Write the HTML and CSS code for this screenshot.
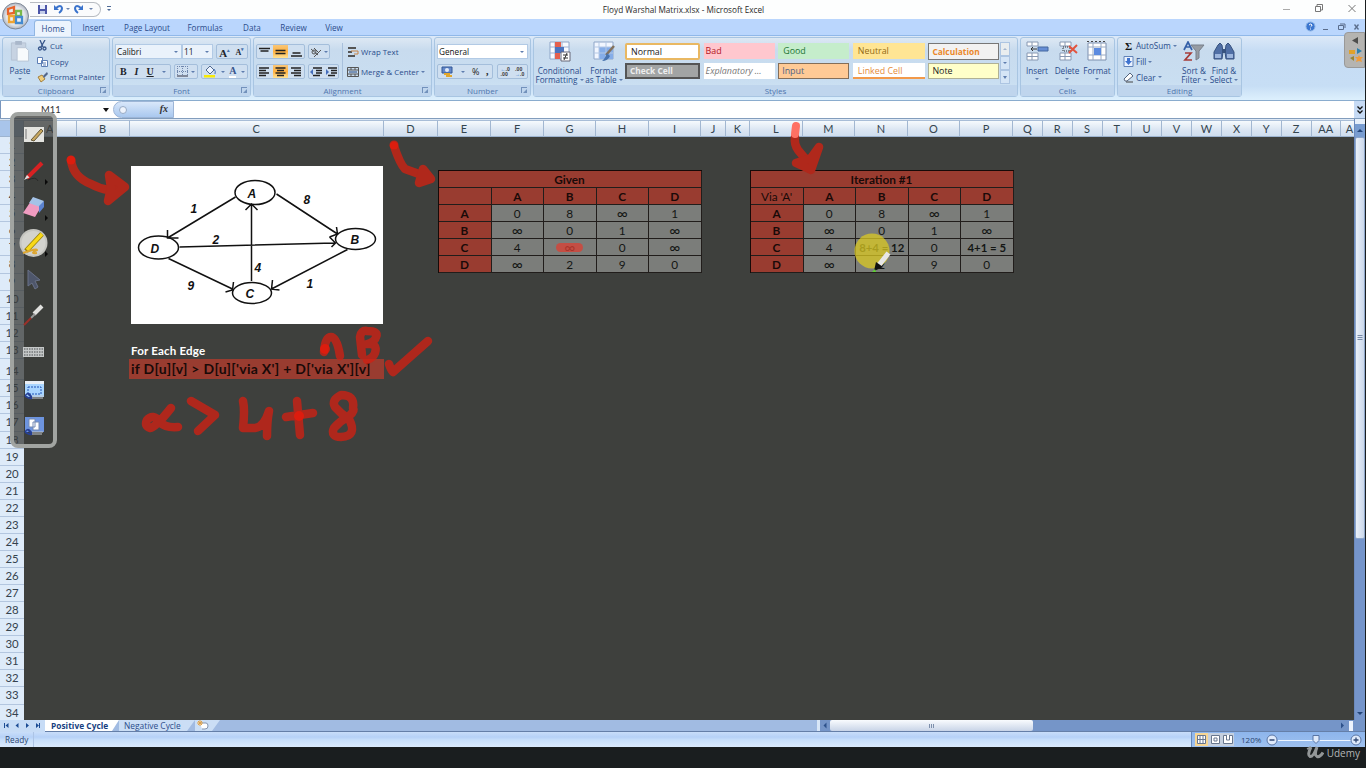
FILE: index.html
```html
<!DOCTYPE html>
<html lang="en"><head><meta charset="utf-8"><title>Floyd Warshal Matrix.xlsx - Microsoft Excel</title>
<link rel="stylesheet" href="styles.css"></head>
<body>
<div class="app">
<header class="titlebar">
  <svg class="orb" width="32" height="32" viewBox="0 0 32 32"><defs><radialGradient id="og"><stop offset="0" stop-color="#fff"/><stop offset=".7" stop-color="#e2e5ea"/><stop offset="1" stop-color="#aeb5c0"/></radialGradient></defs><circle cx="15.5" cy="16" r="13" fill="url(#og)" stroke="#7d8796"/><g fill="none" stroke-width="2.3"><path d="M8 9l6-2v6l-6 1z" stroke="#e8632b"/><path d="M16 11h5v5h-5z" stroke="#79b84a"/><path d="M9 16h5v6H9z" stroke="#f0a431"/><path d="M16 17h6v6h-6z" stroke="#438ad0"/></g></svg>
  <div class="qat">
    <svg width="66" height="14" viewBox="0 0 66 14"><path d="M3 2h9v9H3z" fill="#4c56a8"/><path d="M5 2h5v4H5z" fill="#e6ecfa"/><path d="M5 8h5v3H5z" fill="#c3cde8"/><path d="M21 5q5-4 6 0 0 3-3 5" fill="none" stroke="#3a73cc" stroke-width="2"/><path d="M19 2v5h5z" fill="#3a73cc"/><path d="M31 5h4l-2 2z" fill="#6c84ad"/><path d="M46 5q-5-4-6 0 0 3 3 5" fill="none" stroke="#3a73cc" stroke-width="2"/><path d="M48 2v5h-5z" fill="#3a73cc"/><path d="M54 5h4l-2 2z" fill="#6c84ad"/></svg>
  </div>
  <svg class="qmore" width="6" height="8" viewBox="0 0 6 8"><path d="M1 1h4v1H1zM1 4h4L3 6z" fill="#4f6b97"/></svg>
  <div class="title">Floyd Warshal Matrix.xlsx - Microsoft Excel</div>
  <svg class="winbtns" width="80" height="16" viewBox="0 0 80 16" fill="none" stroke="#777"><path d="M3 9.500h7" stroke="#aaa"/><path d="M35.500 6.500h5v5h-5zM37 6V4.500h5.500V10H41"/><path d="M68.500 5l7 7M75.500 5l-7 7"/></svg>
</header>
<nav class="tabs"><span class="tab on">Home</span><span class="tab t2">Insert</span><span class="tab t3">Page Layout</span><span class="tab t4">Formulas</span><span class="tab t5">Data</span><span class="tab t6">Review</span><span class="tab t7">View</span>
<svg class="docbtns" width="60" height="16" viewBox="0 0 60 16" fill="none"><circle cx="8.500" cy="7.500" r="4.500" fill="#3b76d0" stroke="#8db4e4"/><path d="M7 6q2-2 3 0 0 1-1.500 2M8.500 9.500v1" stroke="#fff"/><path d="M21 10.500h5M36.500 6.500h5v4h-5zM38 5h5v4" stroke="#5a6d8c"/><path d="M52.500 5.500l4 5M56.500 5.500l-4 5" stroke="#5a6d8c" stroke-width="1.300"/></svg></nav>

<section class="ribbon">
 <div class="group clip"><div class="body">
   <div class="big paste"><svg width="22" height="23" viewBox="0 0 22 23"><path d="M2 2h15v18H2z" fill="#c7d3e2" stroke="#b5c2d3"/><path d="M6 0h7v4H6z" fill="#a9b7ca"/><path d="M8 7h9l3 3v11H8z" fill="#f7fafc" stroke="#b9c5d5"/></svg><span>Paste</span><i class="dn"></i></div>
   <div class="list"><div><svg width="11" height="11" viewBox="0 0 11 11" fill="none" stroke="#36558a" stroke-width="1.300"><path d="M3 0l3 7M8 0L4 7"/><circle cx="3" cy="8.500" r="1.500"/><circle cx="7.500" cy="8.500" r="1.500"/></svg>Cut</div><div><svg width="11" height="11" viewBox="0 0 11 11" fill="#fff" stroke="#5d7eb5"><path d="M.5 1.500h5v6h-5zM4.500 4.500h6v6h-6z"/><path d="M6 7h3M6 9h3"/></svg>Copy</div><div><svg width="11" height="11" viewBox="0 0 11 11"><path d="M1 5l4-2 3 4-4 3z" fill="#f0ce7b" stroke="#a4803f"/><path d="M6 4l4-4 1 2-4 4z" fill="#52668b"/></svg>Format Painter</div></div>
 </div><div class="cap">Clipboard<b></b></div></div>

 <div class="group font"><div class="body rows">
   <div class="row"><div class="combo w68">Calibri<i class="dn"></i></div><div class="combo w30">11<i class="dn"></i></div><div class="set w33 ml3"><span class="serif big-a">A<sup>▴</sup></span><span class="serif small">A<sup>▾</sup></span></div></div>
   <div class="row"><div class="set w57"><span class="serif">B</span><span class="serif it">I</span><span class="serif ul">U</span><i class="dn"></i></div><div class="set w25 ml3"><svg width="11" height="11" viewBox="0 0 11 11" fill="none" stroke="#6f86ac" stroke-dasharray="1 1"><path d="M.5 0v10M5.500 0v10M10.500 0v10M0 .5h11M0 5.500h11"/><path d="M0 10h11" stroke="#334" stroke-dasharray="none"/></svg><i class="dn"></i></div><div class="set w48 ml3"><svg width="12" height="13" viewBox="0 0 12 13"><path d="M2 5l4-4 4 4-4 4z" fill="#edf4ff" stroke="#50698f"/><path d="M10 4q2 2 1 5" stroke="#4773b7" fill="none"/><path d="M0 10h11v2.500H0z" fill="#f7ea08"/></svg><i class="dn"></i><span class="serif fontc">A</span><i class="dn"></i></div></div>
 </div><div class="cap">Font<b></b></div></div>

 <div class="group align"><div class="body"><div class="rows inner">
   <div class="row"><div class="set w49 tri"><span><svg width="11" height="12" viewBox="0 0 11 12"><path d="M0 2.500h11M1.500 5h8" stroke="#222" stroke-width="1.400"/></svg></span><span class="hot"><svg width="11" height="12" viewBox="0 0 11 12"><path d="M.5 4.500h10M.5 7.500h10" stroke="#222" stroke-width="1.400"/></svg></span><span><svg width="11" height="12" viewBox="0 0 11 12"><path d="M1.500 7h8M0 10h11" stroke="#222" stroke-width="1.400"/></svg></span></div><div class="set w22 ml3"><svg width="13" height="12" viewBox="0 0 13 12" fill="none" stroke="#555"><circle cx="4" cy="6" r="2"/><path d="M1 3l7 6M4 2l4 4M4 11l7-7"/></svg><i class="dn"></i></div></div>
   <div class="row"><div class="set w49 tri"><span><svg width="11" height="12" viewBox="0 0 11 12"><path d="M0 2h10M0 4.500h7M0 7h10M0 9.500h7" stroke="#222" stroke-width="1.400"/></svg></span><span class="hot"><svg width="11" height="12" viewBox="0 0 11 12"><path d="M.5 2h10M2 4.500h7M.5 7h10M2 9.500h7" stroke="#222" stroke-width="1.400"/></svg></span><span><svg width="11" height="12" viewBox="0 0 11 12"><path d="M0 2h10M3 4.500h7M0 7h10M3 9.500h7" stroke="#222" stroke-width="1.400"/></svg></span></div><div class="set w31 ml3"><svg width="12" height="12" viewBox="0 0 12 12"><path d="M3 2h9M6 4.500h6M6 7h6M3 9.500h7" stroke="#222" stroke-width="1.400"/><path d="M0 6l3-3v6z" fill="#466ebc"/></svg><svg width="12" height="12" viewBox="0 0 12 12"><path d="M3 2h9M6 4.500h6M6 7h6M3 9.500h7" stroke="#222" stroke-width="1.400"/><path d="M4 6L1 3v6z" fill="#466ebc"/></svg></div></div>
 </div><div class="wrapcol"><div><svg width="12" height="12" viewBox="0 0 12 12"><path d="M1 2h8M1 6h4M1 10h7" stroke="#555" stroke-width="2"/><path d="M4 5h7v3H7" fill="none" stroke="#c88345"/></svg><span>Wrap Text</span></div><div><svg width="12" height="12" viewBox="0 0 12 12" fill="none" stroke="#555"><path d="M.5 1.500h11v9H.5zM.5 4h11M.5 8h11M4 1v3M8 1v3M4 8v3M8 8v3"/><path d="M2 6h8" stroke="#24477f"/></svg><span>Merge &amp; Center</span><i class="dn"></i></div></div>
 </div><div class="cap">Alignment<b></b></div></div>

 <div class="group number"><div class="body rows">
  <div class="row"><div class="combo w91">General<i class="dn"></i></div></div>
  <div class="row"><div class="set w56"><svg width="13" height="12" viewBox="0 0 13 12"><path d="M1 1h10v6H1z" fill="#6488c9" stroke="#315796"/><circle cx="6" cy="4" r="2" fill="#dfe9f8"/><path d="M3 8h6M5 10h6" stroke="#e2a72d" stroke-width="2"/></svg><i class="dn"></i><span class="pct">%</span><span class="serif">,</span></div><div class="set w31 ml4 dec"><span><em>←</em>.0<br>.00</span><span>.00<br><em>→</em>.0</span></div></div>
 </div><div class="cap">Number<b></b></div></div>

 <div class="group styles"><div class="body">
  <div class="big cf"><svg width="22" height="22" viewBox="0 0 22 22"><path d="M1 1h19v17H1z" fill="#f7faff" stroke="#8fa6c8"/><path d="M6 1v17M13 1v17M1 6h19M1 12h19" stroke="#9fb2d0"/><path d="M6 1h6v5H6zM6 12h5v6H6z" fill="#e4604e"/><path d="M6 6h9v6H6z" fill="#4b74bf"/><path d="M12 11h9v9h-9z" fill="#fff" stroke="#667"/><path d="M14 14h5M14 17h5M18 12l-3 7" stroke="#333"/></svg><span>Conditional<br>Formatting <i class="dn"></i></span></div>
  <div class="big ft"><svg width="23" height="22" viewBox="0 0 23 22"><path d="M1 1h19v17H1z" fill="#f1f6ff" stroke="#8fa6c8"/><path d="M6 6h14v12H6z" fill="#85ade8"/><path d="M6 1v17M13 1v17M1 6h19M1 12h19" stroke="#b4c8e5"/><path d="M21 5l-8 9" stroke="#84725c" stroke-width="2.500"/><path d="M14 12l3 3q-2 5-8 5 3-2 5-8" fill="#4772ae"/></svg><span>Format<br>as Table <i class="dn"></i></span></div>
  <div class="gallery"><span class="g-normal">Normal</span><span class="g-bad">Bad</span><span class="g-good">Good</span><span class="g-neutral">Neutral</span><span class="g-calc">Calculation</span><span class="g-check">Check Cell</span><span class="g-exp">Explanatory ...</span><span class="g-input">Input</span><span class="g-link">Linked Cell</span><span class="g-note">Note</span></div>
  <div class="spin"><span><i class="dn up"></i></span><span><i class="dn"></i></span><span><i class="dn line"></i></span></div>
 </div><div class="cap">Styles</div></div>

 <div class="group cells"><div class="body">
  <div class="big"><svg width="23" height="22" viewBox="0 0 23 22"><path d="M1 1h11v4H1zM1 12h11v7H1z" fill="#fff" stroke="#8798b2"/><path d="M6 1v4M6 12v7M1 15.500h11" stroke="#8798b2"/><path d="M12 6h10v4H12z" fill="#668ed5" stroke="#44689f"/><path d="M11 8H5m2-2L5 8l2 2" stroke="#333" fill="none"/></svg><span>Insert</span><i class="dn"></i></div>
  <div class="big"><svg width="23" height="22" viewBox="0 0 23 22"><path d="M4 1h11v4H4zM4 12h11v7H4z" fill="#fff" stroke="#8798b2"/><path d="M9 1v4M9 12v7M4 15.500h11" stroke="#8798b2"/><path d="M7 6h7v4H7z" fill="none" stroke="#333" stroke-dasharray="1 1"/><path d="M13 5l8 7M21 4l-8 8" stroke="#e1543f" stroke-width="2"/></svg><span>Delete</span><i class="dn"></i></div>
  <div class="big"><svg width="23" height="22" viewBox="0 0 23 22"><path d="M2 2h18v17H2z" fill="#fff" stroke="#7c8fae"/><path d="M7 2v17M15 2v17M2 6h18M2 14h18" stroke="#9aabc4"/><path d="M8 7h7v7H8z" fill="#5c8be0"/><path d="M1 .5h20" stroke="#444" stroke-dasharray="2 2"/></svg><span>Format</span><i class="dn"></i></div>
 </div><div class="cap">Cells</div></div>

 <div class="group editing"><div class="body">
  <div class="list"><div><strong>Σ</strong>AutoSum <i class="dn"></i></div><div><svg width="11" height="11" viewBox="0 0 11 11"><path d="M1 .5h9v10H1z" fill="#eaf2ff" stroke="#6283b8"/><path d="M4 2h3v3h2L5.500 9 2 5h2z" fill="#3f73cf"/></svg>Fill <i class="dn"></i></div><div><svg width="11" height="11" viewBox="0 0 11 11"><path d="M1 7l6-6 3 3-6 5H2z" fill="#fff" stroke="#53637c"/><path d="M3 10h7" stroke="#444"/></svg>Clear <i class="dn"></i></div></div>
  <div class="big sort"><svg width="22" height="22" viewBox="0 0 22 22"><path d="M8 4h13l-5 6v7l-3 2v-9z" fill="#979ca3" stroke="#777f8b"/><path d="M1 9l4-8 4 8M3 6h4" fill="none" stroke="#3560a8" stroke-width="1.700"/><path d="M2 12h6l-6 7h7" fill="none" stroke="#a63b38" stroke-width="1.700"/></svg><span>Sort &amp;<br>Filter <i class="dn"></i></span></div>
  <div class="big"><svg width="22" height="22" viewBox="0 0 22 22"><path d="M5 4l2-2 2 2 1 7-1 7H1v-7zM17 4l-2-2-2 2-1 7 1 7h8v-7z" fill="#506fa5" stroke="#38537f"/><path d="M9 8h4v4H9z" fill="#38537f"/><path d="M2 13h6v4H2zM14 13h6v4h-6z" fill="#9db6dd"/></svg><span>Find &amp;<br>Select <i class="dn"></i></span></div>
 </div><div class="cap">Editing</div></div>
</section>

<div class="fbar"><div class="namebox">M11<i></i></div><div class="fxbox"><em>fx</em></div><div class="formula"></div><div class="expand"><svg width="8" height="10" viewBox="0 0 8 10" fill="none" stroke="#111" stroke-width="1.300"><path d="M1.500 1.500L4 4l2.500-2.500M1.500 5.500L4 8l2.500-2.500"/></svg></div></div>

<main class="sheetwrap">
 <div class="sheetmain">
 <div class="colhead cols"><span class="corner"></span><span>A</span><span>B</span><span>C</span><span>D</span><span>E</span><span>F</span><span>G</span><span>H</span><span>I</span><span>J</span><span>K</span><span>L</span><span>M</span><span>N</span><span>O</span><span>P</span><span>Q</span><span>R</span><span>S</span><span>T</span><span>U</span><span>V</span><span>W</span><span>X</span><span>Y</span><span>Z</span><span>AA</span><span class="last">A</span></div>
 <div class="sheet cols">
  <div class="rownums"><span>1</span><span>2</span><span>3</span><span>4</span><span>5</span><span>6</span><span>7</span><span>8</span><span>9</span><span>10</span><span>11</span><span>12</span><span>13</span><span>14</span><span>15</span><span>16</span><span>17</span><span>18</span><span>19</span><span>20</span><span>21</span><span>22</span><span>23</span><span>24</span><span>25</span><span>26</span><span>27</span><span>28</span><span>29</span><span>30</span><span>31</span><span>32</span><span>33</span><span>34</span></div>
  <div class="colc">
   <svg class="graph" width="252" height="158" viewBox="131.500 166 252 158"><rect x="131" y="166" width="253" height="158" fill="#fff"/><g fill="#fff" stroke="#111" stroke-width="1.500"><ellipse cx="255.500" cy="192.500" rx="20" ry="12"/><ellipse cx="356" cy="239" rx="20" ry="10.500"/><ellipse cx="159" cy="247.500" rx="20" ry="11.500"/><ellipse cx="252.500" cy="293" rx="19.500" ry="10.500"/></g><g fill="none" stroke="#111" stroke-width="1.500"><path d="M236 197L168 238M168 230v8h11M277 194l61 40M337 227l1 7-8 3M180 247l155-4M330 237l6 6-4 4M252 281v-77M246 210l6-6 6 6M348 249.500L272 289M273 280l-1 9 8 1M169 258.500L233 289M234 282l-1 8-7 2"/></g><g class="gl"><text x="248" y="197.500">A</text><text x="351" y="243.500">B</text><text x="151" y="252.500">D</text><text x="246" y="297.500">C</text><text x="191" y="212.500">1</text><text x="304" y="203.500">8</text><text x="213" y="243.500">2</text><text x="255" y="271.500">4</text><text x="188" y="290">9</text><text x="307" y="288">1</text></g></svg>
   <div class="edge">For Each Edge</div><div class="rule">if D[u][v] &gt; D[u]['via X'] + D['via X'][v]</div>
  </div>
  <div class="matrix m1"><b class="full">Given</b><b></b><b>A</b><b>B</b><b>C</b><b>D</b><b>A</b><span>0</span><span>8</span><span class="inf">∞</span><span>1</span><b>B</b><span class="inf">∞</span><span>0</span><span>1</span><span class="inf">∞</span><b>C</b><span>4</span><span class="inf">∞</span><span>0</span><span class="inf">∞</span><b>D</b><span class="inf">∞</span><span>2</span><span>9</span><span>0</span></div>
  <div class="matrix m2"><b class="full">Iteration #1</b><b class="thin">Via 'A'</b><b>A</b><b>B</b><b>C</b><b>D</b><b>A</b><span>0</span><span>8</span><span class="inf">∞</span><span>1</span><b>B</b><span class="inf">∞</span><span>0</span><span>1</span><span class="inf">∞</span><b>C</b><span>4</span><span class="strong">8+4 = 12</span><span>0</span><span class="strong">4+1 = 5</span><b>D</b><span class="inf">∞</span><span>2</span><span>9</span><span>0</span></div>
 </div></div>
 <div class="vscroll"><div class="split"></div><div class="vup"><svg width="10" height="13" viewBox="0 0 10 13"><path d="M2 8l3-3 3 3z" fill="#234579"/></svg></div><div class="vthumb"><svg width="8" height="8" viewBox="0 0 8 8"><path d="M1.500 1.500h5M1.500 3.500h5M1.500 5.500h5" stroke="#788ba8"/></svg></div><div class="vdown"><svg width="10" height="13" viewBox="0 0 10 13"><path d="M2 5l3 3 3-3z" fill="#234579"/></svg></div></div>
</main>

<div class="sheettabs"><svg width="45" height="12" viewBox="0 0 45 12" fill="#1d4c94"><path d="M4 3h1v5H4zM8.500 3v5L5.500 5.500zM18.500 3v5l-3-2.500zM26 3v5l3-2.500zM36 3v5l3-2.500zM39 3h1v5h-1z"/></svg><span class="stab active">Positive Cycle</span><span class="stab neg">Negative Cycle</span><span class="stab new"><svg width="12" height="11" viewBox="0 0 12 11"><path d="M3 3h6q2 0 2 3t-3 3H5" fill="#fff" stroke="#8494ae"/><path d="M3 0v6M0 3h6M1 1l4 4M5 1L1 5" stroke="#e5a240"/></svg></span><span class="grow"></span><div class="hscroll"><span class="hl"><svg width="11" height="11" viewBox="0 0 11 11"><path d="M6.500 2.500v6l-3-3z" fill="#2e528b"/></svg></span><span class="hthumb"><svg width="8" height="6" viewBox="0 0 8 6"><path d="M1.500 1v4M3.500 1v4M5.500 1v4" stroke="#7d8fab"/></svg></span><span class="htrack"></span><span class="hr"><svg width="9" height="11" viewBox="0 0 9 11"><path d="M3 2.500v6l3-3z" fill="#2e528b"/></svg></span><span class="hs"></span></div></div>
<footer class="status"><span class="ready">Ready</span><div class="zoom"><svg width="39" height="13" viewBox="0 0 39 13"><path d="M0 0h13v13H0z" fill="#f7d694"/><path d="M13 0h26v13H13z" fill="#c5d0df"/><g fill="#fff" stroke="#68778e"><path d="M2.500 2.500h8v8h-8zM5 2v9M8 2v9M2 6.500h9M16.500 2.500h8v8h-8zM28.500 2.500h9v8h-9z"/><path d="M19 5h3v3h-3zM31.500 2v5h3V2"/></g></svg><span>120%</span><svg width="96" height="14" viewBox="0 0 96 14"><path d="M12 7.500h73" stroke="#edf5ff"/><g fill="#dfeafb" stroke="#5975a5"><circle cx="6" cy="7" r="5"/><circle cx="90" cy="7" r="5"/><path d="M47 2.500h6v5l-3 3-3-3z"/></g><path d="M3.500 7h5M87.500 7h5M90 4.500v5" stroke="#334a75" stroke-width="1.300"/></svg></div></footer>
<div class="blackbar"><svg width="19" height="16" viewBox="0 0 19 16" fill="none" stroke="#929697"><path d="M6 3Q2 11 5 12.500q3 1 7-9.500-3 8 0 9.500 3 1 6-4" stroke-width="3"/><path d="M2 5l4-2" stroke-width="1.500"/></svg><span>Udemy</span></div>

<svg class="ink" width="1366" height="768" viewBox="0 0 1366 768" fill="none" stroke-linecap="round" stroke-linejoin="round">
 <g stroke="#b0281b" stroke-width="8.500">
 <path d="M71 160q2 17 20 24 9 5 18 6"/><path d="M109 175l16 12-17 14 3-13z" fill="#b0281b"/>
 <path d="M394 146q6 18 11 23l14 5"/><path d="M423 169l8 10-12 4z" fill="#b0281b"/>
 <path d="M795 137q-1 7 3 13l10 12"/><path d="M819 147l-8 23-15-7 15-5z" fill="#b0281b"/></g>
 <g stroke="#cf2013" stroke-opacity=".78" stroke-width="8.500">
 <path d="M324 352q1-15 7-15 6 0 9 19M362 355l-2-18q1-7 7-6 12 0 9 6-1 5-9 7 11-1 8 9-2 5-8 7M389 364q2 6 4 8l35-31"/>
 <path d="M171 408q-15 19-21 20-6-2-3-8 6-7 13 2 5 6 18 5M191 401l24 14-17 16M243 401q2 9 0 27h12q9-1 14-17-2 10-2 25M286 417l27-4M297 401l3 34"/>
 <path d="M353 408q2-13-12-13-10 5-6 12 6 7 14 12 9 17-8 18-11 0-7-9 6-7 15-12 6-5 4-8"/></g>
 <path d="M796 126l-1 8" stroke="#ff7164" stroke-width="8"/><g fill="#f11808" fill-opacity=".7"><circle cx="71" cy="160" r="4.500"/><circle cx="394" cy="145" r="4.500"/><circle cx="325" cy="349" r="5"/><circle cx="299" cy="416" r="5"/></g>
 <path d="M560.500 247.500h18" stroke="#dd3e32" stroke-opacity=".74" stroke-width="9"/>
 <circle cx="872" cy="251" r="17.500" fill="#dccb22" fill-opacity=".74"/>
 <path d="M879 265l9.500-12" stroke="#e7e7e7" stroke-width="5" stroke-linecap="butt"/><path d="M874 271l2-9 7 5z" fill="#111"/><path d="M872 272l3-3 1 3z" fill="#5ed134"/>
</svg>
<aside class="pens">
 <svg width="39" height="328" viewBox="14 116 39 328"><path d="M24 127h20v15H24z" fill="#e4e4e0"/><path d="M26 129v10" stroke="#777"/><path d="M31 140l10-11 2 2-9 10z" fill="#c8a75e" stroke="#665939"/><path d="M27 178l15-15" stroke="#d72122" stroke-width="4"/><path d="M24 180l3-5 2.500 2.500z" fill="#ddd"/><path d="M28 180q8-4 10 1" stroke="#292929" fill="none"/><path d="M45 179l3 3-3 3z" fill="#090909"/>
 <path d="M23 213l10-15 11 4-9 15z" fill="#f09cc1"/><path d="M33 197l11 4-4 6-11-4z" fill="#a4c3e8"/><path d="M39 206l5-5v6l-5 6z" fill="#5b83d0"/><path d="M45 215l3 3-3 3z" fill="#090909"/>
 <circle cx="33.500" cy="243" r="14" fill="#c5c5c0"/><circle cx="33.500" cy="243" r="12" fill="#e5e5e1" fill-opacity=".45"/><path d="M26 251l16-17" stroke="#957f09" stroke-width="5"/><path d="M27 250l15-16" stroke="#f8d919" stroke-width="3.500"/><path d="M23 253q14-5 14-3-8 4 0 3" stroke="#dda631" stroke-width="2" fill="none"/><path d="M45 251l3 3-3 3z" fill="#090909"/>
 <path d="M28 270v16l4-3 3 6 3-2-3-6 5-1z" fill="#4e566b" stroke="#687188"/><path d="M34 314l8-8" stroke="#e1e1df" stroke-width="4"/><path d="M31 318l4-4" stroke="#999" stroke-width="2"/><path d="M24 325l7-7" stroke="#9b3029" stroke-width="2"/>
 <path d="M23 347h21v10H23z" fill="#c5c8c8"/><path d="M24 349h19M24 352h19M24 355h19" stroke="#4b4e50" stroke-dasharray="1.500 1"/>
 <path d="M25 381h19v16H25z" fill="#a9d5ff"/><path d="M25 381h19v3H25z" fill="#e9eef5"/><path d="M28 387h13v7H28z" fill="none" stroke="#2152b5" stroke-dasharray="2 1"/><path d="M25 417h19v15H25z" fill="#6d94df"/><path d="M29 419h6v8h-6zM33 422h6v8h-6z" fill="#fff" stroke="#768bb3"/><g stroke="#263f94" stroke-width="1.500" fill="none"><path d="M25 396q3-5 6 0t-6 0M28 394l3 3M25 432q3-5 6 0t-6 0M28 430l3 3"/></g><path d="M32 396h12M32 398h11M32 432h11M32 434h10" stroke="#c3c8d0"/></svg>
</aside>
<aside class="sidetab"><svg width="20" height="34" viewBox="0 0 20 34"><path d="M13 4v7L7 7.500z" fill="#4e4e4c"/><path d="M4 17h6v4H4z" fill="#e0a22a"/><path d="M12 15l5 3-5 3z" fill="#2d81ad"/><path d="M9 23v5l-4-3z" fill="#9a852c"/><path d="M14 22l1 2h3l-2 2 1 3-3-1-3 1 1-3-2-2h3z" fill="#ee9b3a"/></svg></aside>
</div>
</body></html>
```

FILE: styles.css
```css
*{box-sizing:border-box}
body{margin:0;width:1366px;height:768px;overflow:hidden;background:#1a1e1f;font-family:"Open Sans","Noto Sans",sans-serif;font-size:8.2px;color:#2a4c8b}
svg{display:block;flex:none}
.app{position:relative;width:1365px;height:768px;overflow:hidden;display:flex;flex-direction:column}
.app>*{flex:none}
.titlebar{height:19px;background:#fdfefe;display:flex;align-items:flex-start}
.orb{position:absolute;left:0;top:0;z-index:3}
.qat{margin:2px 0 0 30px;width:71px;height:15px;border:1px solid #b8bcc2;border-left:0;border-radius:0 8px 8px 0;padding-left:5px;background:#fafbfc}
.qmore{margin:5px 0 0 5px}
.title{flex:1;text-align:center;color:#292929;font-size:8.2px;line-height:19px;padding-right:25px}
.winbtns{margin:0 5px 0 0}
.tabs{height:17px;background:#bad6fd;border-bottom:1px solid #90b8e9;display:flex;padding-left:34px;align-items:flex-end;font-size:8.1px}
.tab{height:16px;line-height:17px;text-align:center;width:46px}
.tab.on{width:38px;height:16px;background:#ecf4fd;border:1px solid #91b6e2;border-bottom:0;border-radius:3px 3px 0 0;line-height:15px;margin-bottom:-1px}
.t2{width:43px}.t3{width:64px}.t4{width:52px}.t5{width:42px}.t6{width:41px}.t7{width:40px}
.docbtns{margin-left:auto;margin-right:3px}
.ribbon{height:65px;background:linear-gradient(#dce9f8,#c6dcf4 15px,#c7def5 50px,#ddf0fd);border-bottom:1px solid #8aacce;padding:1px 2px 3px;display:flex;gap:2px}
.group{border:1px solid #a8c5e2;border-radius:3px;background:linear-gradient(#dde8f4,#c8dbee 12px,#c9def1 44px,#d4e7f5);display:flex;flex-direction:column}
.clip{width:108px}.font{width:139px}.align{width:179px}.number{width:97px}.styles{width:485px}.cells{width:95px}.editing{width:125px}
.group>.body{height:48px;display:flex}
.cap{height:11px;line-height:11px;background:#bfd5ed;color:#4f76ad;text-align:center;position:relative;font-size:8px}
.cap b{position:absolute;right:3px;top:2px;width:6px;height:6px;border-left:1px solid #7291bb;border-top:1px solid #7291bb}
.cap b::after{content:"";position:absolute;right:0;bottom:0;border:2px solid #7291bb;border-left-color:transparent;border-top-color:transparent}
.dn{display:inline-block;width:0;height:0;border:2px solid transparent;border-top:2.5px solid #5e7dae;border-bottom:0;flex:none;vertical-align:middle}
.big{display:flex;flex-direction:column;align-items:center;text-align:center;line-height:9px;padding-top:3px;white-space:nowrap}
.big>svg{height:22px}.big>span{margin-top:3px}.big>.dn{margin-top:3px}
.cf>span,.ft>span,.editing .big>span{margin-top:2.5px}
.paste{width:34px}
.list{display:flex;flex-direction:column}
.list>div{height:15.8px;display:flex;align-items:center;gap:2px;white-space:nowrap}
.clip .list{font-size:7.9px}
.rows{display:flex;flex-direction:column;gap:5px;padding:6px 2px 0 3px}
.group>.body.rows{flex-direction:column}
.font .rows{padding-left:2px}.group.font>.rows{padding-left:2px}
.row{display:flex;height:15px}
.combo{height:15px;background:#eaf2fb;border:1px solid #b2cae5;color:#111;line-height:13px;padding:0 3px 0 1px;display:flex;justify-content:space-between;align-items:center}
.set{height:15px;border:1px solid #a4bedb;border-radius:2px;background:#cfdff0;display:flex;align-items:center;justify-content:space-around}
.w68{width:68px}.w30{width:31px}.w33{width:33px}.w57{width:57px}.w25{width:25px}.w48{width:48px}.w49{width:49px}.w22{width:22px}.w31{width:31px}.w91{width:91px}.w56{width:56px}
.ml3{margin-left:3px}.ml4{margin-left:4px}
.serif{font:bold 10px/12px "Liberation Serif",serif;color:#20242a}.big-a{font-size:11px}.small{font-size:8px}.serif sup{font-size:5px;color:#4670aa}.it{font-style:italic}.ul{text-decoration:underline}.fontc{color:#38568d;border-bottom:2px solid #fff;line-height:10px}
.tri>span{height:13px;flex:1;display:flex;align-items:center;justify-content:center}.tri .hot{background:linear-gradient(#f8c678,#ffb140,#ffe295)}
.inner{width:88px;padding-left:2px;border:0}
.wrapcol{border-left:1px solid #a8c0dc;margin:5px 0 5px;padding:2px 0 0 4px;display:flex;flex-direction:column;gap:7px;font-size:7.9px}
.wrapcol>div{display:flex;align-items:center;gap:2px;white-space:nowrap;height:13px}
.group.number>.rows{padding-left:2px}.number .combo{background:#fff}
.pct{font-size:9px;color:#222}.dec{font-size:5px;line-height:5px;font-weight:bold;color:#444}.dec em{color:#3979d0;font-style:normal}
.cf{width:51px;padding-left:0}.ft{width:38px}
.cf .dn,.ft .dn,.editing .big .dn{margin-top:-1px}
.gallery{margin:5px 0 0 2px;width:375px;height:38px;display:grid;grid-template-columns:75px 71px 71px 72px 71px;grid-template-rows:17px 16px;column-gap:3.6px;row-gap:3px;font-size:8.9px}
.gallery span{padding-left:5px;line-height:15px;white-space:nowrap;overflow:hidden}
.gallery .g-normal{background:#fff;border:2px solid #e9b862;color:#222;line-height:13px;border-radius:2px;padding-left:4px}
.gallery .g-bad{background:#ffc7ce;color:#b31422;padding-left:2px}
.g-good{background:#c5edcb;color:#217534}.g-neutral{background:#ffe594;color:#936a13}
.gallery .g-calc{background:#f2f2f2;border:1px solid #777;color:#eb8829;font-weight:bold;font-size:8.4px;line-height:15px}
.gallery .g-check{background:#a2a4a4;border:2px double #555;color:#eee;font-weight:bold;font-size:8.4px;line-height:12px;padding-left:3px}
.gallery .g-exp{background:#fff;color:#777;font-style:italic;padding-left:2px}
.gallery .g-input{background:#ffca96;border:1px solid #846e59;color:#536385;line-height:14px}
.g-link{background:#fff;border-bottom:2px solid #f2994a;color:#e58c3b}
.gallery .g-note{background:#ffffc9;border:1px solid #b0b195;color:#222;line-height:14px}
.gallery .g-calc,.gallery .g-note,.gallery .g-input{padding-left:3px}.gallery .g-bad,.gallery .g-good,.gallery .g-neutral{height:16px}
.spin{width:10px;margin-top:4px;height:42px;display:flex;flex-direction:column}
.spin span{flex:1;border:1px solid #adc5e2;display:flex;align-items:center;justify-content:center;background:#d5e5f6}.spin span:first-child{background:#e9edef}.up{transform:rotate(180deg);opacity:.5}.line{border-top-width:3px}
.cells .body{padding-left:1px}.cells .big{width:30px}
.editing .list{width:61px;padding-left:5px;font-size:8.1px}.editing strong{font:bold 11px "Liberation Serif",serif;color:#151515;width:11px;text-align:center}.editing .big{width:30px}
.fbar{height:18px;border-bottom:1px solid #829dbd;background:#fff;display:flex;color:#333}
.namebox{width:113px;display:flex;justify-content:space-between;align-items:center;padding:0 4px 0 40px;font:9.4px Lato,sans-serif;border-left:1px solid #7895bd}.namebox i{border:3px solid transparent;border-top:4px solid #111;border-bottom:0}
.fxbox{width:61px;background:linear-gradient(#d9e7fa,#a9c8ef);border:1px solid #9db5d6;border-radius:9px 0 0 9px;text-align:right;padding:0 5px;font:bold 10px/14px "Liberation Serif",serif}.fxbox::before{content:"";float:left;width:6px;height:6px;border-radius:50%;background:#eef3fc;border:1px solid #98abc5;margin-top:4px}
.formula{flex:1}.expand{width:11px;background:#c6daf4;display:flex;justify-content:center;align-items:center}
.sheetwrap{height:601px;display:flex;background:#dcecff}
.sheetmain{width:1354px;overflow:hidden}
.cols{display:grid;grid-template-columns:24px 52.5px 53px 254.5px 54px 53px 53px 52px 53px 52px 25px 24px 52.5px 52.5px 53px 52px 53px 30px 29.5px 30px 29.5px 30px 30px 30px 30px 29.5px 30px 29.5px 13px}
.colhead{height:18px;padding-top:1px;background:#dfe9f5;font:11px/15px Lato,sans-serif;color:#34454f;overflow:hidden}
.colhead span{text-align:center;background:linear-gradient(#f6fafd,#dae5f2 60%,#cfdeee);border-right:1px solid #a2b7d1;border-top:1px solid #a8bdd7;border-bottom:1px solid #9db4d0;height:17px}
.colhead .last{border-right:0;padding-left:4px}
.colhead .corner{background:#a9c5ea}
.sheet{height:583px;background:#3e403d;grid-template-rows:583px;overflow:hidden}
.rownums{background:#deebf9;font:11.4px/16.07px Lato,sans-serif;color:#35424d;text-align:center;overflow:hidden}
.rownums span{display:block;height:17.07px;border-bottom:1px solid #b3c6df}.rownums span:nth-child(14){height:21.5px;line-height:24px}
.colc{grid-column:4;padding-top:29px;margin-left:-.5px}
.graph{margin-left:2px}
.gl{font:italic bold 12px "Liberation Sans",sans-serif;fill:#111}
.edge{margin:18px 0 0 2px;height:17px;font:bold 11.6px/17px Lato,sans-serif;letter-spacing:.15px;color:#fff;white-space:nowrap}
.rule{height:20px;background:#993c30;color:#190a08;font:bold 14px/20px Lato,sans-serif;padding-left:2px;white-space:nowrap;letter-spacing:.3px}
.matrix{margin-top:33px;height:103px;display:grid;grid-template-columns:53px 52.5px 52.5px 52.5px 52.5px;grid-template-rows:repeat(6,17.05px);width:264px;font:11.8px/17px Lato,sans-serif;color:#141614;border-top:1px solid #160a08;border-left:1px solid #160a08;align-self:start}
.m1{grid-column:6/11;margin-left:-.5px}.m2{grid-column:13/18;margin-left:-.5px}
.matrix>*{border-right:1px solid #211d1b;border-bottom:1px solid #211d1b;text-align:center;background:#7b7d7a;white-space:nowrap}
.matrix b{background:#993c30;color:#190a08}.matrix .full{grid-column:1/6}.matrix .thin{font-weight:400}.matrix .strong{font-weight:bold;font-size:11.4px}
.matrix .inf{font-size:15px;line-height:16px;overflow:hidden}
.vscroll{width:11px;background:#7595cb;display:flex;flex-direction:column;border-left:1px solid #6c8abc}
.split{height:5px;background:#e6effa}.vup{height:13px;background:#789cd0}.vthumb{height:402px;background:linear-gradient(90deg,#eaf0f9,#cbd8eb);border:1px solid #8da6ca;border-radius:2px;display:flex;align-items:center;justify-content:center}.vdown{margin-top:auto;height:13px}
.sheettabs{height:12px;background:#a1bbe2;display:flex;align-items:stretch;border-bottom:1px solid #657fa8;font-size:8.2px;line-height:11px}.sheettabs>svg{background:#c7dcf6}
.stab{background:#cbdef5;white-space:nowrap}.neg{width:76px;padding-left:5px;font-size:8.4px;clip-path:polygon(0 0,100% 0,calc(100% - 8px) 100%,0 100%)}.active{width:74px;padding-left:6px;background:#fff;font-weight:bold;font-size:8.3px;letter-spacing:.05px;color:#183f80;clip-path:polygon(0 0,100% 0,calc(100% - 7px) 100%,0 100%)}.new{width:25px;padding-left:2px;clip-path:polygon(0 0,100% 0,calc(100% - 8px) 100%,0 100%)}.grow{flex:1}
.hscroll{display:flex;width:548px;background:#7595c8;border-left:3px solid #d8e6f7}.hl{width:10px}.hthumb{width:203px;background:linear-gradient(#f9fbfe,#c8d4e7);border-radius:2px;display:flex;align-items:center;justify-content:center}.htrack{flex:1}.hr{width:9px}.hs{width:4px;background:#edf3fd;margin:1px 12px 0 2px}
.status{height:15px;background:linear-gradient(#c9defa,#b6d1f7 5px,#c8dffb 8px,#dbeafd);display:flex;justify-content:space-between;color:#29446f}.ready{padding-left:5px;line-height:15px;width:34px;border-right:1px solid #adc4e5}.zoom{width:174px;background:linear-gradient(#8db5ec,#9fc1ef);border-left:1px solid #6487ba;padding-left:3px;display:flex;align-items:center;gap:7px;white-space:nowrap}.zoom>span{width:20px;font-size:8px}.zoom>svg:last-child{margin-left:-2px}
.blackbar{height:21px;background:#1a1e1f;display:flex;justify-content:flex-end;padding-right:5px;gap:3px;color:#b4b7b7;font-size:10px;line-height:12px}.blackbar svg{margin-top:-3px}
.ink{position:absolute;left:0;top:0;z-index:4}
.pens{position:absolute;left:10px;top:112px;width:47px;height:336px;border:4px solid #a1a4a1;border-radius:8px;background:rgba(60,61,59,.77);z-index:5}
.sidetab{position:absolute;right:0;top:32px;width:21px;height:36px;background:#b5b4b1;border:1px solid #999;border-radius:4px 0 0 4px;z-index:6}
```
